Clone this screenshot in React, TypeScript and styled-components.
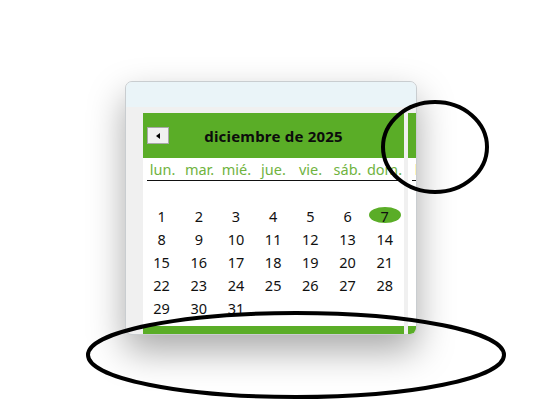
import React from "react";
import styled, { createGlobalStyle } from "styled-components";

const GlobalStyle = createGlobalStyle`
  html, body {
    margin: 0;
    padding: 0;
    background: #ffffff;
  }
  body {
    font-family: "Noto Sans", "Open Sans", sans-serif;
  }
`;

const Page = styled.div`
  position: relative;
  width: 551px;
  height: 413px;
  overflow: hidden;
  padding: 81px 0 0 125px;
  box-sizing: border-box;
`;

const Card = styled.div`
  width: 292px;
  height: 254px;
  box-sizing: border-box;
  background: #f0f0f0;
  border: 1px solid #c9cdd0;
  border-radius: 7px;
  box-shadow: 0 16px 36px rgba(0, 0, 0, 0.34);
  overflow: hidden;
  display: flex;
  flex-direction: column;
`;

const TitleBand = styled.div`
  height: 25px;
  flex-shrink: 0;
  background: #eaf4f8;
`;

const Months = styled.div`
  flex: 1;
  display: flex;
  gap: 4px;
  padding: 6px 0 0 17px;
  min-height: 0;
`;

const MonthPanel = styled.div`
  width: 261px;
  flex-shrink: 0;
  background: #ffffff;
  display: flex;
  flex-direction: column;
`;

const MonthHeader = styled.div`
  height: 45px;
  background: #5aad27;
  display: flex;
  align-items: center;
  justify-content: center;
  position: relative;
`;

const PrevButton = styled.div`
  position: absolute;
  left: 4px;
  top: 14px;
  width: 20px;
  height: 15px;
  background: #f1f1f1;
  border: 1px solid #a8a8a8;
  display: flex;
  align-items: center;
  justify-content: center;

  &::before {
    content: "";
    width: 0;
    height: 0;
    border-top: 3.5px solid transparent;
    border-bottom: 3.5px solid transparent;
    border-right: 4px solid #000;
  }
`;

const MonthTitle = styled.div`
  font-size: 15px;
  font-weight: 700;
  color: #0c0c0c;
  letter-spacing: 0.2px;
`;

const DayNames = styled.div`
  display: grid;
  grid-template-columns: repeat(7, 37px);
  height: 22px;
  margin: 0 4px 0 4px;
  border-bottom: 1px solid #111;
  align-items: center;
`;

const DayName = styled.div`
  text-align: center;
  font-size: 14.5px;
  color: #70b340;
  margin-left: -6px;
  white-space: nowrap;
`;

const DaysGrid = styled.div`
  display: grid;
  grid-template-columns: repeat(7, 37.2px);
  grid-auto-rows: 23px;
  padding-top: 23px;
  flex: 1;
`;

const Day = styled.div<{ $selected?: boolean }>`
  display: flex;
  align-items: center;
  justify-content: center;
  font-size: 14.5px;
  color: #111;
  position: relative;
  z-index: 0;

  ${({ $selected }) =>
    $selected &&
    `
    &::before {
      content: "";
      position: absolute;
      left: 3px;
      right: 2px;
      top: 3px;
      bottom: 4px;
      border-radius: 50%;
      background: #5aad27;
      z-index: -1;
    }
  `}
`;

const Footer = styled.div`
  height: 8px;
  background: #5aad27;
  flex-shrink: 0;
`;

const Annotations = styled.svg`
  position: absolute;
  left: 0;
  top: 0;
  width: 551px;
  height: 413px;
  pointer-events: none;
`;

const dayNames = ["lun.", "mar.", "mié.", "jue.", "vie.", "sáb.", "dom."];

function Month({ title, first }: { title?: string; first: boolean }) {
  const days = Array.from({ length: 31 }, (_, i) => i + 1);
  return (
    <MonthPanel>
      <MonthHeader>
        {first && <PrevButton />}
        {title && <MonthTitle>{title}</MonthTitle>}
      </MonthHeader>
      <DayNames>
        {(first ? dayNames : dayNames.slice(0, 1)).map((d) => (
          <DayName key={d}>{d}</DayName>
        ))}
      </DayNames>
      <DaysGrid>
        {first &&
          days.map((d) => (
            <Day key={d} $selected={d === 7}>
              {d}
            </Day>
          ))}
      </DaysGrid>
      <Footer />
    </MonthPanel>
  );
}

export default function App() {
  return (
    <>
      <GlobalStyle />
      <Page>
        <Card>
          <TitleBand />
          <Months>
            <Month title="diciembre de 2025" first />
            <Month first={false} />
          </Months>
        </Card>
        <Annotations viewBox="0 0 551 413">
          <ellipse cx="435" cy="147" rx="52" ry="45" fill="none" stroke="#000" strokeWidth="4" />
          <ellipse cx="296" cy="355" rx="208" ry="42" fill="none" stroke="#000" strokeWidth="4" />
        </Annotations>
      </Page>
    </>
  );
}
